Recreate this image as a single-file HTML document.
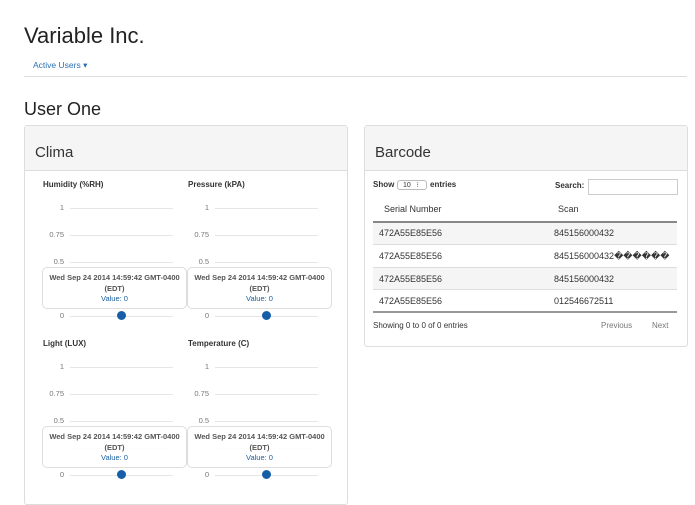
<!DOCTYPE html><html><head><style>
*{margin:0;padding:0;box-sizing:border-box}
body{width:695px;height:494px;overflow:hidden;background:#fff;font-family:"Liberation Sans",Arial,sans-serif;color:#333;position:relative}
.a{position:absolute;white-space:nowrap}
.panel{position:absolute;border:1px solid #ddd;border-radius:3px;background:#fff}
.ph{background:#f5f5f5;border-bottom:1px solid #ddd;height:45px;font-size:15px;padding:18px 0 0 10px}
.lbl{font-size:8px;font-weight:bold;color:#333}
.ax{font-size:7.5px;color:#777;text-align:right;width:20px}
.gl{height:1px;background:#e6e6e6;width:103px}
.tt{border:1px solid #ddd;border-radius:5px;background:rgba(255,255,255,.92);width:145px;height:42px;text-align:center;font-size:7.5px;font-weight:bold;color:#555;padding-top:5px;line-height:10.5px}
.tt span{color:#1a5fa0;font-weight:normal}
.dot{width:9px;height:9px;border-radius:50%;background:#175ea8}
.t{font-size:9px;color:#333}
</style></head><body>
<div class="a" style="left:24px;top:23px;font-size:22px;color:#222">Variable Inc.</div>
<div class="a" style="left:33px;top:60px;font-size:8.5px;color:#2a6fb5">Active Users ▾</div>
<div class="a" style="left:24px;top:76px;width:663px;height:1px;background:#ddd"></div>
<div class="a" style="left:24px;top:99px;font-size:18px;color:#222">User One</div>

<div class="panel" style="left:24px;top:125px;width:324px;height:380px"><div class="ph">Clima</div></div>
<div class="panel" style="left:364px;top:125px;width:324px;height:222px"><div class="ph">Barcode</div></div>

<div id="charts"></div>
<script>
var ch=[["Humidity (%RH)",0,0],["Pressure (kPA)",145,0],["Light (LUX)",0,159],["Temperature (C)",145,159]];
var h="";
ch.forEach(function(c){var x=c[1],y=c[2];
h+='<div class="a lbl" style="left:'+(43+x)+'px;top:'+(180+y)+'px">'+c[0]+'</div>';
var v=["1","0.75","0.5","0.25","0"];
for(var i=0;i<5;i++){var yy=208+27*i+y;if(yy>490)break;
h+='<div class="a ax" style="left:'+(44+x)+'px;top:'+(yy-5)+'px;'+(i==3?'color:#ddd':'')+'">'+v[i]+'</div>';
h+='<div class="a gl" style="left:'+(70+x)+'px;top:'+yy+'px"></div>';}
h+='<div class="a tt" style="left:'+(42+x)+'px;top:'+(267+y)+'px">Wed Sep 24 2014 14:59:42 GMT-0400<br>(EDT)<br><span>Value: 0</span></div>';
h+='<div class="a dot" style="left:'+(117+x)+'px;top:'+(311+y)+'px"></div>';});
document.getElementById("charts").innerHTML=h;
</script>

<div class="a t" style="left:373px;top:180px;font-weight:bold;font-size:8px">Show</div>
<div class="a" style="left:397px;top:180px;width:30px;height:10px;border:1px solid #bbb;border-radius:3px;font-size:7px;padding-left:5px;line-height:9px">10 &nbsp;&nbsp;⁝</div>
<div class="a t" style="left:430px;top:180px;font-weight:bold;font-size:8px">entries</div>
<div class="a t" style="left:555px;top:181px;font-weight:bold;font-size:8px">Search:</div>
<div class="a" style="left:588px;top:179px;width:90px;height:16px;border:1px solid #ccc"></div>
<div class="a t" style="left:384px;top:204px">Serial Number</div>
<div class="a t" style="left:558px;top:204px">Scan</div>
<div class="a" style="left:373px;top:221px;width:304px;height:2px;background:#888"></div>
<div class="a" style="left:373px;top:223px;width:304px;height:22px;background:#f5f5f5;border-bottom:1px solid #ddd"></div>
<div class="a" style="left:373px;top:245px;width:304px;height:23px;border-bottom:1px solid #ddd"></div>
<div class="a" style="left:373px;top:268px;width:304px;height:22px;background:#f5f5f5;border-bottom:1px solid #ddd"></div>
<div class="a" style="left:373px;top:311px;width:304px;height:2px;background:#999"></div>
<div class="a t" style="left:379px;top:228px">472A55E85E56</div><div class="a t" style="left:554px;top:228px">845156000432</div>
<div class="a t" style="left:379px;top:251px">472A55E85E56</div><div class="a t" style="left:554px;top:251px">845156000432������</div>
<div class="a t" style="left:379px;top:274px">472A55E85E56</div><div class="a t" style="left:554px;top:274px">845156000432</div>
<div class="a t" style="left:379px;top:296px">472A55E85E56</div><div class="a t" style="left:554px;top:296px">012546672511</div>
<div class="a" style="left:373px;top:321px;font-size:8px;color:#333">Showing 0 to 0 of 0 entries</div>
<div class="a" style="left:601px;top:321px;font-size:8px;color:#777">Previous</div>
<div class="a" style="left:652px;top:321px;font-size:8px;color:#777">Next</div>
</body></html>
